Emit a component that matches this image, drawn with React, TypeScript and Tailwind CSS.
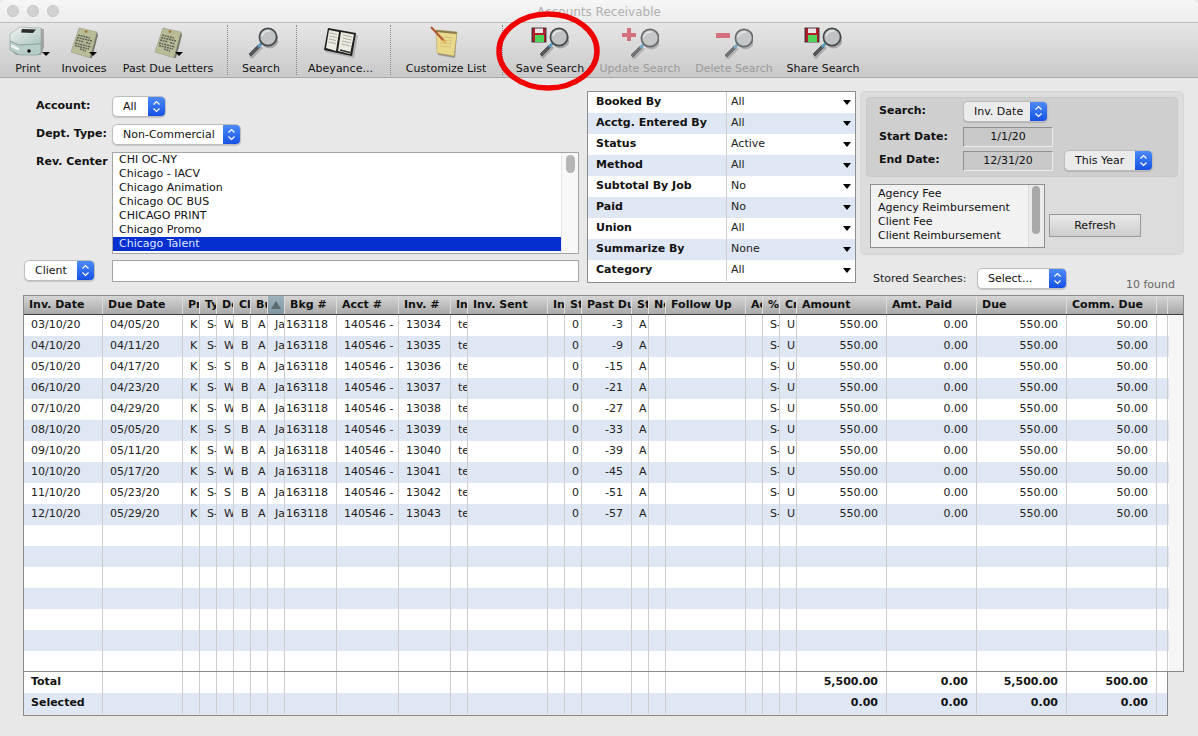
import React from "react";

const Printer = () => (
  <svg width="40" height="36" viewBox="0 0 40 36">
    <defs>
      <linearGradient id="pr" x1="0" y1="0" x2="1" y2="1"><stop offset="0" stopColor="#f2f6f5" /><stop offset="1" stopColor="#a9c2bd" /></linearGradient>
    </defs>
    <path d="M2 12 L13 3 L36 4 L36 22 L33 30 L8 30 L3 25 Z" fill="#3a3a3a" opacity=".35" />
    <path d="M2 9 L12 2 L33 3 L33 19 L11 20 L2 16 Z" fill="url(#pr)" stroke="#8a9a96" strokeWidth=".5" />
    <path d="M14 4 L28 4.500 L25 8 L13 7.500 Z" fill="#2c2c2c" />
    <path d="M2 16 L11 20 L33 19 L33 27 L30 30 L11 30 L2 25 Z" fill="#b6cdc8" stroke="#77888a" strokeWidth=".5" />
    <path d="M3 19 L11 23 L11 26 L3 22 Z" fill="#eef3f2" />
    <circle cx="21" cy="26" r="1.800" fill="#111" />
  </svg>
);
const Note = () => (
  <svg width="30" height="32" viewBox="0 0 30 32">
    <path d="M10 1 L28 5 L21 31 L2 25 Z" fill="#b9bc97" stroke="#8f9177" strokeWidth=".5" />
    <path d="M21 31 L28 5 L29 8 L23 31 Z" fill="#77786a" />
    <circle cx="17" cy="4.500" r="1.300" fill="#a46a2e" />
    <path d="M9 8 L21 11 M8 10.500 L23 14 M7 13 L15 15 M17 15.500 L22 17 M6 16 L22 20 M6 18.500 L20 22 M11 22 L17 24" stroke="#5f6158" strokeWidth="1.500" strokeDasharray="2 .7" fill="none" />
  </svg>
);
const Lens = ({ x = 0, y = 0, s = 1 }: { x?: number; y?: number; s?: number }) => (
  <g transform={`translate(${x} ${y}) scale(${s})`}>
    <path d="M2 28 L13 17 L16 20 L5 31 Z" fill="#222" opacity=".25" transform="translate(1 1)" />
    <path d="M3 27 L12 18 L14 20 L5 29 Z" fill="#55585c" stroke="#333" strokeWidth=".6" />
    <path d="M11 19 L15 15 L17 17 L13 21 Z" fill="#5b9bc0" />
    <circle cx="22" cy="11" r="9" fill="#444" opacity=".35" transform="translate(1.500 1.500)" />
    <circle cx="22" cy="10" r="8.600" fill="#bfc3c4" stroke="#46494c" strokeWidth="1.700" />
    <path d="M16 9 A7 7 0 0 1 24 4" stroke="#e7e9e9" strokeWidth="1.500" fill="none" />
  </g>
);
const SearchIcon = () => (<svg width="34" height="32" viewBox="0 0 34 32"><Lens x={2} y={0} /></svg>);
const Book = () => (
  <svg width="36" height="32" viewBox="0 0 36 32">
    <path d="M6 1 L34 7 L30 30 L1 24 Z" fill="#555" opacity=".3" transform="translate(1 1)" />
    <path d="M5 1 L33 6 L29 29 L1 23 Z" fill="#1e1e1e" />
    <path d="M6 3 L16 5 L13 24 L3 21 Z" fill="#ecebe1" />
    <path d="M18 5 L31 7.500 L27 27 L15 24 Z" fill="#ecebe1" />
    <path d="M7 6 L14 7.500 M6.500 9 L14 10.500 M6 12 L13 13.500 M5.500 15 L13 16.500 M20 8 L29 10 M19.500 11 L28.500 13 M19 14 L28 16 M18.500 17 L27.500 19" stroke="#9b9b92" strokeWidth=".8" />
    <path d="M17 23 L27 25.500" stroke="#333" strokeWidth="1.500" />
  </svg>
);
const Pad = () => (
  <svg width="32" height="34" viewBox="0 0 32 34">
    <path d="M8 5 L27 7 L25 32 L8 29 Z" fill="#6f6c52" opacity=".6" />
    <path d="M6 4 L27 6 L24 30 L7 27 Z" fill="#ead98b" stroke="#a99b59" strokeWidth=".5" />
    <path d="M6 4 L27 6 L26.500 8 L6 6 Z" fill="#8a7a4a" />
    <path d="M11 11 L23 12 M10 14 L22 15 M10 17 L22 18 M10 20 L21 21" stroke="#c9ba72" strokeWidth=".7" />
    <path d="M1 1 L15 16" stroke="#b0532f" strokeWidth="2" />
    <path d="M13 14 L16 17" stroke="#e3b25a" strokeWidth="2" />
  </svg>
);
const SaveIcon = () => (
  <svg width="38" height="32" viewBox="0 0 38 32">
    <rect x="1" y="1" width="14" height="14" fill="#b01f2b" stroke="#222" strokeWidth=".8" />
    <rect x="4" y="1.500" width="8" height="4.500" fill="#e8e8e8" />
    <rect x="4" y="8" width="9" height="7" fill="#4fd35a" />
    <Lens x={6} y={0} s={1} />
  </svg>
);
const PlusIcon = () => (
  <svg width="38" height="32" viewBox="0 0 38 32" opacity=".78">
    <path d="M6 1 H10 V6 H15 V10 H10 V14 H6 V10 H1 V6 H6 Z" fill="#d1505f" />
    <Lens x={7} y={1} s={1} />
  </svg>
);
const MinusIcon = () => (
  <svg width="38" height="32" viewBox="0 0 38 32" opacity=".78">
    <rect x="1" y="6" width="14" height="5" fill="#d1505f" />
    <Lens x={7} y={1} s={1} />
  </svg>
);

const Tool = ({ w, mr = 0, label, dim, arrow, children }: { w: number; mr?: number; label: string; dim?: boolean; arrow?: number; children: React.ReactNode }) => (
  <div className="relative flex flex-col items-center shrink-0" style={{ width: w, marginRight: mr }}>
    <div className="h-[36px] flex items-center justify-center">{children}</div>
    <div className={`mt-[1px] text-[11px] leading-[14px] whitespace-nowrap ${dim ? "text-[#9a9a9a]" : "text-[#111]"}`}>{label}</div>
    {arrow !== undefined && (
      <div className="absolute top-[27px] w-0 h-0 border-l-[4px] border-r-[4px] border-t-[4px] border-l-transparent border-r-transparent border-t-black" style={{ left: arrow }} />
    )}
  </div>
);
const Sep = ({ mr }: { mr: number }) => <div className="w-0 h-[50px] border-l border-dotted border-[#888] shrink-0" style={{ marginRight: mr }} />;

const Chev = () => (
  <svg width="9" height="15" viewBox="0 0 9 15" fill="none" stroke="#fff" strokeWidth="1.200"><path d="M1.500 5.500 L4.500 2.500 L7.500 5.500" /><path d="M1.500 9.500 L4.500 12.500 L7.500 9.500" /></svg>
);
const Sel = ({ w, label, gray, pl = 11 }: { w: number; label: string; gray?: boolean; pl?: number }) => (
  <div className={`h-[21px] flex rounded-[5px] border border-[#bdbdbd] overflow-hidden shrink-0 shadow-[0_1px_1px_rgba(0,0,0,.15)] ${gray ? "bg-[#ebebeb]" : "bg-white"}`} style={{ width: w }}>
    <div className="flex-1 text-[11px] leading-[20px] text-[#111] whitespace-nowrap" style={{ paddingLeft: pl - 1 }}>{label}</div>
    <div className="w-[17px] flex items-center justify-center bg-gradient-to-b from-[#4d8af8] to-[#1650e4]"><Chev /></div>
  </div>
);

const revs = ["CHI OC-NY", "Chicago - IACV", "Chicago Animation", "Chicago OC BUS", "CHICAGO PRINT", "Chicago Promo", "Chicago Talent"];
const filters = [["Booked By", "All"], ["Acctg. Entered By", "All"], ["Status", "Active"], ["Method", "All"], ["Subtotal By Job", "No"], ["Paid", "No"], ["Union", "All"], ["Summarize By", "None"], ["Category", "All"]];

type Col = { h: string; w: number; right?: boolean };
const cols: Col[] = [
  { h: "Inv. Date", w: 80 }, { h: "Due Date", w: 80 }, { h: "Pr", w: 17 }, { h: "Ty", w: 17 }, { h: "De", w: 17 }, { h: "Cl", w: 17 }, { h: "Bu", w: 17 }, { h: "", w: 17 },
  { h: "Bkg #", w: 52 }, { h: "Acct #", w: 62 }, { h: "Inv. #", w: 52 }, { h: "In", w: 17 }, { h: "Inv. Sent", w: 80 }, { h: "In", w: 17 }, { h: "St", w: 17 },
  { h: "Past Du", w: 50, right: true }, { h: "St", w: 17 }, { h: "Ne", w: 17 }, { h: "Follow Up", w: 80 }, { h: "Ac", w: 17 }, { h: "%", w: 17 }, { h: "Cr", w: 17 },
  { h: "Amount", w: 90, right: true }, { h: "Amt. Paid", w: 90, right: true }, { h: "Due", w: 90, right: true }, { h: "Comm. Due", w: 90, right: true }, { h: "", w: 11 },
];
const invDates = ["03/10/20", "04/10/20", "05/10/20", "06/10/20", "07/10/20", "08/10/20", "09/10/20", "10/10/20", "11/10/20", "12/10/20"];
const dueDates = ["04/05/20", "04/11/20", "04/17/20", "04/23/20", "04/29/20", "05/05/20", "05/11/20", "05/17/20", "05/23/20", "05/29/20"];
const dept = ["W", "W", "S", "W", "W", "S", "W", "W", "S", "W"];
const past = [-3, -9, -15, -21, -27, -33, -39, -45, -51, -57];

const rowData = (i: number): string[] =>
  i < 10
    ? [invDates[i], dueDates[i], "K", "S-", dept[i], "B", "A", "Ja", "163118", "140546 -", String(13034 + i), "te", "", "", "0", String(past[i]), "A", "", "", "", "S-", "U", "550.00", "0.00", "550.00", "50.00", ""]
    : cols.map(() => "");

const totals: [string, string[]][] = [
  ["Total", ["5,500.00", "0.00", "5,500.00", "500.00"]],
  ["Selected", ["0.00", "0.00", "0.00", "0.00"]],
];

export default function App() {
  return (
    <div className="relative w-[1198px] h-[736px] overflow-hidden bg-[#e8e8e8] flex flex-col font-['DejaVu_Sans',sans-serif] text-[#111]">
      {/* title bar */}
      <div className="relative h-[22px] shrink-0 bg-gradient-to-b from-[#f7f7f7] to-[#ececec] rounded-t-[6px] flex items-center pl-[7px] gap-[8px]">
        <div className="w-[12px] h-[12px] rounded-full bg-[#d2d2d2] border border-[#c6c6c6]" />
        <div className="w-[12px] h-[12px] rounded-full bg-[#d2d2d2] border border-[#c6c6c6]" />
        <div className="w-[12px] h-[12px] rounded-full bg-[#d2d2d2] border border-[#c6c6c6]" />
        <div className="absolute inset-x-0 top-[4px] text-center text-[12px] leading-[16px] text-[#b0b0b0]">Accounts Receivable</div>
      </div>
      {/* toolbar */}
      <div className="h-[56px] shrink-0 flex items-center pl-[4px] border-t border-b border-t-[#bdbdbd] border-b-[#a9a9a9] bg-gradient-to-b from-[#e6e6e6] to-[#c9c9c9]">
        <Tool w={48} mr={3} label="Print" arrow={38}><Printer /></Tool>
        <Tool w={58} mr={4} label="Invoices" arrow={34}><Note /></Tool>
        <Tool w={102} mr={8} label="Past Due Letters" arrow={58}><Note /></Tool>
        <Sep mr={3} />
        <Tool w={60} mr={5} label="Search"><SearchIcon /></Tool>
        <Sep mr={3} />
        <Tool w={81} mr={9} label="Abeyance..."><Book /></Tool>
        <Sep mr={4} />
        <Tool w={102} mr={5} label="Customize List"><Pad /></Tool>
        <Sep mr={7} />
        <Tool w={80} mr={0} label="Save Search"><SaveIcon /></Tool>
        <Tool w={100} mr={0} label="Update Search" dim><PlusIcon /></Tool>
        <Tool w={88} mr={0} label="Delete Search" dim><MinusIcon /></Tool>
        <Tool w={90} mr={0} label="Share Search"><SaveIcon /></Tool>
      </div>
      {/* form */}
      <div className="h-[218px] shrink-0 flex pt-[13px]">
        <div className="w-[587px] shrink-0 flex flex-col">
          <div className="flex h-[21px] mt-[5px] items-center">
            <div className="w-[112px] pl-[36px] text-[11px] font-bold pb-[1px]">Account:</div>
            <Sel w={54} label="All" />
          </div>
          <div className="flex h-[21px] mt-[7px] items-center">
            <div className="w-[112px] pl-[36px] text-[11px] font-bold pb-[1px]">Dept. Type:</div>
            <Sel w={129} label="Non-Commercial" />
          </div>
          <div className="flex mt-[7px]">
            <div className="w-[112px] pl-[36px] text-[11px] font-bold pt-[2px] leading-[16px]">Rev. Center</div>
            <div className="relative w-[467px] h-[102px] border border-[#a5a5a5] bg-white overflow-hidden">
              {revs.map((r, i) => (
                <div key={r} className={`h-[14px] leading-[14px] text-[11px] pl-[6px] ${i === 0 ? "mt-0" : ""} ${i === 6 ? "bg-[#062fd0] text-[#dfe6ff] mr-0" : ""}`}>{r}</div>
              ))}
              <div className="absolute right-0 inset-y-0 w-[17px] bg-[#f8f8f8] border-l border-[#e6e6e6]">
                <div className="absolute top-[2px] left-[4px] w-[9px] h-[18px] rounded-full bg-[#b5b5b5]" />
              </div>
            </div>
          </div>
          <div className="flex mt-[6px] pl-[24px]">
            <Sel w={71} label="Client" />
            <div className="ml-[17px] w-[467px] h-[22px] border border-[#a5a5a5] bg-white" />
          </div>
        </div>
        <div className="w-[269px] h-[192px] shrink-0 border border-[#8e8e8e] bg-white flex flex-col">
          {filters.map(([a, b], i) => (
            <div key={a} className={`h-[21px] flex shrink-0 ${i % 2 ? "bg-[#e0e7f4]" : "bg-white"}`}>
              <div className="w-[138px] shrink-0 pl-[8px] text-[11px] font-bold leading-[19px]">{a}</div>
              <div className="flex-1 border-l border-[#cfcfcf] pl-[4px] flex items-center justify-between pr-[4px]">
                <span className="text-[11px] text-[#222]">{b}</span>
                <span className="w-0 h-0 border-l-[4.500px] border-r-[4.500px] border-t-[5px] border-l-transparent border-r-transparent border-t-black" />
              </div>
            </div>
          ))}
        </div>
        <div className="ml-[4px] w-[324px] shrink-0 flex flex-col">
          <div className="h-[164px] rounded-[5px] bg-[#dcdcdc] border border-[#d6d6d6] p-[5px]">
            <div className="h-[80px] rounded-[4px] bg-[#cfcfcf] border border-[#c8c8c8] flex flex-col pl-[12px] pt-[3px]">
              <div className="flex items-center h-[21px]">
                <div className="w-[84px] text-[11px] font-bold">Search:</div>
                <Sel w={85} label="Inv. Date" gray />
              </div>
              <div className="flex items-center h-[20px] mt-[5px]">
                <div className="w-[84px] text-[11px] font-bold">Start Date:</div>
                <div className="w-[90px] h-[20px] bg-[#c9c9c9] border-t border-l border-[#8f8f8f] border-b border-r border-b-[#ececec] border-r-[#ececec] text-center text-[11px] leading-[17px]">1/1/20</div>
              </div>
              <div className="flex items-center h-[21px] mt-[3px]">
                <div className="w-[84px] text-[11px] font-bold">End Date:</div>
                <div className="w-[90px] h-[20px] bg-[#c9c9c9] border-t border-l border-[#8f8f8f] border-b border-r border-b-[#ececec] border-r-[#ececec] text-center text-[11px] leading-[17px]">12/31/20</div>
                <div className="ml-[11px]"><Sel w={89} label="This Year" gray /></div>
              </div>
            </div>
            <div className="flex mt-[7px] pl-[4px]">
              <div className="relative w-[175px] h-[64px] border border-[#8f8f8f] bg-[#f2f2f2] overflow-hidden pl-[7px] pt-[2px]">
                {["Agency Fee", "Agency Reimbursement", "Client Fee", "Client Reimbursement"].map((t) => (
                  <div key={t} className="h-[14px] text-[11px] leading-[14px]">{t}</div>
                ))}
                <div className="absolute right-0 inset-y-0 w-[16px] bg-[#ebebeb] border-l border-[#dcdcdc]">
                  <div className="absolute top-[1px] left-[3px] w-[8px] h-[48px] rounded-full bg-[#a9a9a9]" />
                </div>
              </div>
              <div className="ml-[4px] mt-[30px] w-[92px] h-[23px] border border-[#999] bg-gradient-to-b from-[#e9e9e9] to-[#cdcdcd] text-center text-[11px] leading-[21px]">Refresh</div>
            </div>
          </div>
          <div className="flex items-center mt-[9px] pl-[13px]">
            <div className="w-[104px] text-[11px] text-[#222]">Stored Searches:</div>
            <Sel w={90} label="Select..." />
            <div className="ml-[59px] mt-[13px] text-[11px] text-[#666]">10 found</div>
          </div>
        </div>
      </div>
      {/* table */}
      <div className="ml-[23px] w-[1161px] h-[377px] shrink-0 border-t border-r border-l border-b border-[#8a8a8a] bg-[#f6f6f6] flex flex-col overflow-hidden -mt-[1px]">
        <div className="h-[19px] shrink-0 flex bg-gradient-to-b from-[#d6d6d6] to-[#a9a9a9] border-b border-b-[#3d3d3d]">
          {cols.map((c, i) => (
            <div key={i} className={`relative shrink-0 overflow-hidden whitespace-nowrap text-[11px] font-bold leading-[17px] pl-[5px] border-r border-[#dcdcdc] ${i === 7 ? "bg-gradient-to-b from-[#9fb2bb] to-[#7f96a2]" : ""}`} style={{ width: i === 0 ? c.w - 1 : c.w }}>
              {i === 7 ? <span className="absolute left-[3px] top-[5px] w-0 h-0 border-l-[5px] border-r-[5px] border-b-[8px] border-l-transparent border-r-transparent border-b-[#5d6a70]" /> : c.h}
            </div>
          ))}
        </div>
        {Array.from({ length: 17 }).map((_, r) => {
          const d = rowData(r);
          return (
            <div key={r} className={`h-[21px] shrink-0 flex w-[1145px] ${r % 2 ? "bg-[#e0e7f4]" : "bg-white"}`}>
              {cols.map((c, i) => (
                <div key={i} className={`shrink-0 overflow-hidden whitespace-nowrap text-[11px] leading-[20px] text-[#222] border-r border-[#cdcdcd] ${c.right ? "text-right pr-[8px]" : i === 8 ? "pl-[1px]" : "pl-[7px]"}`} style={{ width: i === 0 ? c.w - 1 : c.w }}>
                  {d[i]}
                </div>
              ))}
            </div>
          );
        })}
      </div>
      {/* totals */}
      <div className="ml-[23px] w-[1145px] h-[44px] shrink-0 border-l border-r border-b border-[#8a8a8a] flex flex-col">
        {totals.map(([name, vals], r) => (
          <div key={name} className={`h-[21px] shrink-0 flex ${r ? "bg-[#e0e7f4]" : "bg-white"}`}>
            {cols.slice(0, 26).map((c, i) => {
              const v = i === 0 ? name : i >= 22 ? vals[i - 22] : "";
              return (
                <div key={i} className={`shrink-0 overflow-hidden whitespace-nowrap text-[11px] font-bold leading-[20px] border-r border-[#cdcdcd] ${i >= 22 ? "text-right pr-[8px]" : "pl-[7px]"}`} style={{ width: i === 0 ? c.w - 1 : c.w }}>{v}</div>
              );
            })}
          </div>
        ))}
      </div>
      {/* annotation */}
      <svg className="absolute left-[490px] top-[4px] pointer-events-none" width="118" height="94" viewBox="0 0 118 94">
        <ellipse cx="58" cy="47" rx="49" ry="37" fill="none" stroke="#f00000" strokeWidth="5.500" />
      </svg>
    </div>
  );
}
